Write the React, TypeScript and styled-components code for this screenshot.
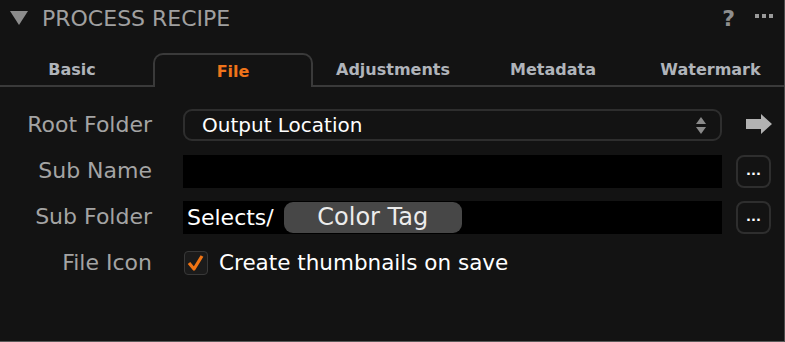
import React from 'react';
import styled, { createGlobalStyle } from 'styled-components';

const GlobalStyle = createGlobalStyle`
  html, body {
    margin: 0;
    padding: 0;
    background: #131313;
  }
`;

const Panel = styled.div`
  width: 785px;
  height: 342px;
  box-sizing: border-box;
  background: #131313;
  border-right: 1px solid #4a4a4a;
  border-bottom: 1px solid #5a5a5a;
  font-family: 'DejaVu Sans', 'Liberation Sans', sans-serif;
  overflow: hidden;
`;

const Header = styled.div`
  height: 34px;
  display: flex;
  align-items: center;
  padding: 0 10px;
  margin-top: 1px;
`;

const Caret = styled.span`
  width: 0;
  height: 0;
  border-left: 9px solid transparent;
  border-right: 9px solid transparent;
  border-top: 14px solid #8c8c8c;
  margin-right: 14px;
`;

const Title = styled.div`
  flex: 1;
  font-size: 22px;
  color: #a0a0a0;
`;

const HelpMark = styled.span`
  font-weight: bold;
  font-size: 22px;
  color: #8e8e8e;
  margin-right: 20px;
`;

const MoreDots = styled.span`
  display: flex;
  gap: 3px;
  margin-top: -4px;
  margin-right: 1px;
  span {
    width: 4px;
    height: 4px;
    background: #9a9a9a;
  }
`;

const TabRow = styled.div`
  display: grid;
  grid-template-columns: 153px 160px 160px 160px 1fr;
  margin-top: 18px;
  height: 34px;
`;

const Tab = styled.div<{ $active?: boolean }>`
  display: flex;
  align-items: center;
  justify-content: center;
  box-sizing: border-box;
  font-weight: bold;
  font-size: 16px;
  padding-top: 1px;
  color: ${(p) => (p.$active ? '#f0741a' : '#b0b4ba')};
  border-bottom: ${(p) => (p.$active ? 'none' : '2px solid #3a3a3a')};
  ${(p) =>
    p.$active &&
    `
    border: 2px solid #3a3a3a;
    border-bottom: none;
    border-radius: 10px 10px 0 0;
  `}
  &:first-child {
    padding-right: 9px;
  }
  &:last-child {
    padding-left: 4px;
  }
`;

const Form = styled.div`
  margin-top: 15px;
  display: flex;
  flex-direction: column;
`;

const Row = styled.div`
  height: 46px;
  display: flex;
  align-items: center;
`;

const Label = styled.div`
  width: 152px;
  text-align: right;
  font-size: 22px;
  color: #a4a4a4;
  margin-right: 31px;
  margin-top: -2px;
  white-space: nowrap;
`;

const Select = styled.div`
  width: 539px;
  height: 32px;
  box-sizing: border-box;
  border: 2px solid #2e2e2e;
  border-radius: 9px;
  display: flex;
  align-items: center;
  padding: 0 14px 0 17px;
  font-size: 20px;
  color: #ffffff;
`;

const SelectText = styled.span`
  flex: 1;
`;

const Stepper = styled.span`
  display: flex;
  flex-direction: column;
  gap: 3px;
  span {
    width: 0;
    height: 0;
    border-left: 5px solid transparent;
    border-right: 5px solid transparent;
  }
  span:first-child {
    border-bottom: 7px solid #8a8a8a;
  }
  span:last-child {
    border-top: 7px solid #8a8a8a;
  }
`;

const Field = styled.div`
  width: 539px;
  height: 33px;
  background: #000;
  display: flex;
  align-items: center;
  padding: 0 4px;
  box-sizing: border-box;
  font-size: 22px;
  color: #fff;
  gap: 10px;
`;

const Token = styled.span`
  width: 178px;
  height: 31px;
  background: #474747;
  border-radius: 9px;
  display: flex;
  align-items: center;
  justify-content: center;
  font-size: 24px;
  color: #ececec;
`;

const Side = styled.div`
  margin-left: 14px;
  display: flex;
  align-items: center;
`;

const DotsButton = styled.div`
  width: 35px;
  height: 33px;
  box-sizing: border-box;
  border: 2px solid #2e2e2e;
  border-radius: 8px;
  display: flex;
  align-items: flex-end;
  justify-content: center;
  padding-bottom: 9px;
  font-size: 13px;
  font-weight: bold;
  line-height: 1;
  color: #ffffff;
`;

const Check = styled.span`
  width: 24px;
  height: 24px;
  box-sizing: border-box;
  border: 1px solid #383838;
  border-radius: 4px;
  background: #1b1b1b;
  display: flex;
  align-items: center;
  justify-content: center;
  margin-right: 11px;
  margin-left: 1px;
`;

const CheckText = styled.span`
  font-size: 21.5px;
  color: #ffffff;
  margin-top: -2px;
`;

export default function App() {
  return (
    <Panel>
      <GlobalStyle />
      <Header>
        <Caret />
        <Title>PROCESS RECIPE</Title>
        <HelpMark>?</HelpMark>
        <MoreDots>
          <span />
          <span />
          <span />
        </MoreDots>
      </Header>
      <TabRow>
        <Tab>Basic</Tab>
        <Tab $active>File</Tab>
        <Tab>Adjustments</Tab>
        <Tab>Metadata</Tab>
        <Tab>Watermark</Tab>
      </TabRow>
      <Form>
        <Row>
          <Label>Root Folder</Label>
          <Select>
            <SelectText>Output Location</SelectText>
            <Stepper>
              <span />
              <span />
            </Stepper>
          </Select>
          <Side>
            <svg width="36" height="22" viewBox="0 0 36 22" style={{ marginLeft: 10 }}>
              <path d="M0 5 H15 V0 L26 10 L15 20 V15 H0 Z" fill="#b2b2b2" />
            </svg>
          </Side>
        </Row>
        <Row>
          <Label>Sub Name</Label>
          <Field />
          <Side>
            <DotsButton>...</DotsButton>
          </Side>
        </Row>
        <Row>
          <Label>Sub Folder</Label>
          <Field>
            Selects/
            <Token>Color Tag</Token>
          </Field>
          <Side>
            <DotsButton>...</DotsButton>
          </Side>
        </Row>
        <Row>
          <Label>File Icon</Label>
          <Check>
            <svg width="18" height="18" viewBox="0 0 18 18">
              <path d="M2 9 L7 15 L15 2" fill="none" stroke="#f07414" strokeWidth="3.2" strokeLinejoin="round" />
            </svg>
          </Check>
          <CheckText>Create thumbnails on save</CheckText>
        </Row>
      </Form>
    </Panel>
  );
}
